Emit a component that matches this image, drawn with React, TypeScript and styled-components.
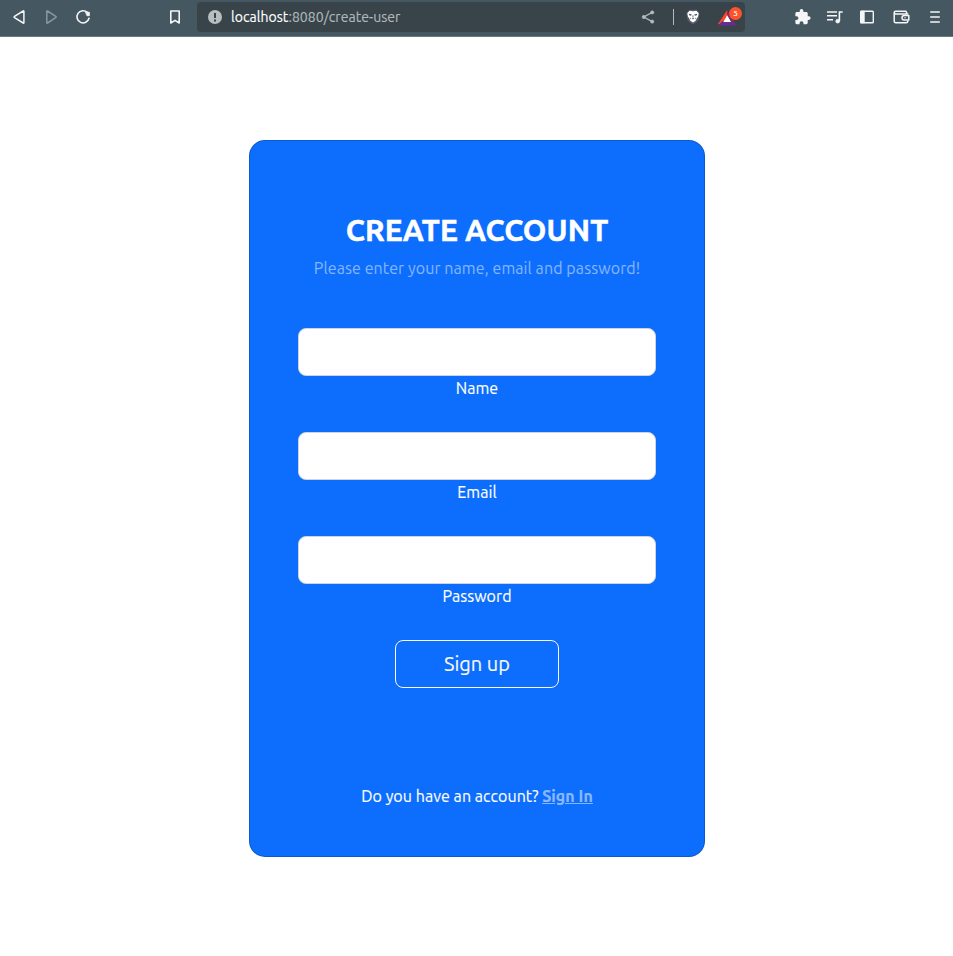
import React from "react";
import styled, { createGlobalStyle } from "styled-components";

const GlobalStyle = createGlobalStyle`
  *, *::before, *::after { box-sizing: border-box; }
  body {
    margin: 0;
    background: #fff;
    color: #fff;
    font-family: Ubuntu, "Noto Sans", sans-serif;
    font-size: 16px;
    line-height: 1.5;
    -webkit-text-stroke-width: 0.15px;
  }
  h2, p { margin: 0; }
`;

const Page = styled.div`
  display: flex;
  flex-direction: column;
  min-height: 956px;
`;

const Toolbar = styled.header`
  display: flex;
  align-items: flex-start;
  height: 37px;
  padding: 2px 2px 0 3px;
  background: #455760;
  border-bottom: 1px solid #6a7980;
`;

const IconButton = styled.button<{ $width?: number; $dim?: boolean }>`
  display: grid;
  place-items: center;
  flex: none;
  width: ${({ $width = 32 }) => $width}px;
  height: 30px;
  padding: 0;
  border: 0;
  background: none;
  color: ${({ $dim }) => ($dim ? "#8b979d" : "#f4f6f7")};
`;

const NavGroup = styled.nav`
  display: flex;
  width: 156px;
`;

const ActionGroup = styled.div`
  display: flex;
  margin-left: auto;
`;

const AddressBar = styled.div`
  display: flex;
  align-items: center;
  width: 548px;
  height: 30px;
  margin-left: 6px;
  padding: 0 2px 0 10px;
  border-radius: 4px;
  background: #38444a;
`;

const Address = styled.span`
  flex: 1;
  margin-left: 8px;
  color: #b1b8bb;
  font-size: 14px;
  line-height: 20px;
  letter-spacing: 0.05px;
`;

const Host = styled.span`
  color: #fff;
`;

const Separator = styled.span`
  width: 1px;
  height: 16px;
  margin: 0 12px 0 17px;
  background: #b3babd;
`;

const Rewards = styled.span`
  position: relative;
  display: block;
  width: 25px;
  height: 24px;
  margin-left: 18px;
`;

const RewardsMark = styled.svg`
  display: block;
  margin-top: 5px;
`;

const Badge = styled.span`
  position: absolute;
  top: 2px;
  right: 1px;
  width: 13px;
  height: 13px;
  border-radius: 50%;
  background: #fb542b;
  color: #fff;
  font-size: 8px;
  line-height: 13px;
  text-align: center;
`;

const Main = styled.main`
  display: flex;
  justify-content: center;
  padding-top: 103px;
`;

const Card = styled.section`
  display: flex;
  flex-direction: column;
  align-items: center;
  width: 456px;
  height: 717px;
  margin-left: 1px;
  padding: 71px 48px 48px;
  border: 1px solid rgba(0, 0, 0, 0.175);
  border-radius: 16px;
  background: #0d6efd;
`;

const Title = styled.h2`
  margin-bottom: 8px;
  font-size: 30px;
  font-weight: 700;
  line-height: 36px;
  letter-spacing: 0.1px;
  text-transform: uppercase;
  -webkit-text-stroke-width: 0.5px;
`;

const Subtitle = styled.p`
  margin-bottom: 48px;
  color: rgba(255, 255, 255, 0.5);
  letter-spacing: 0.09px;
  -webkit-text-stroke-width: 0;
`;

const Form = styled.form`
  display: flex;
  flex-direction: column;
  align-items: center;
  width: 100%;
`;

const Field = styled.div`
  display: flex;
  flex-direction: column;
  align-items: center;
  width: 100%;
  margin-bottom: 32px;
`;

const Input = styled.input`
  width: 100%;
  height: 48px;
  padding: 8px 16px;
  border: 1px solid #ced4da;
  border-radius: 8px;
  background: #fff;
  font: inherit;
  font-size: 20px;
`;

const Label = styled.label`
  line-height: 24px;
  letter-spacing: 0.05px;
`;

const SubmitButton = styled.button`
  width: 164px;
  height: 48px;
  border: 1px solid #f8f9fa;
  border-radius: 8px;
  background: transparent;
  color: #f8f9fa;
  font-family: inherit;
  font-size: 20px;
  line-height: 30px;
`;

const Prompt = styled.p`
  margin-top: auto;
  letter-spacing: 0.06px;
`;

const SignInLink = styled.a`
  color: rgba(255, 255, 255, 0.5);
  font-weight: 700;
  text-decoration: underline;
`;

const FIELDS = [
  { id: "name", label: "Name", type: "text" },
  { id: "email", label: "Email", type: "email" },
  { id: "password", label: "Password", type: "password" },
];

const BackIcon = () => (
  <svg width="16" height="16" viewBox="0 0 16 16" fill="none" stroke="currentColor" strokeWidth="1.5" strokeLinejoin="round">
    <path d="M12.9 2.3v11.4q0 .8-.7.3L3.5 8.6q-.8-.6 0-1.2L12.2 2q.7-.5.7.3Z" />
  </svg>
);

const ForwardIcon = () => (
  <svg width="16" height="16" viewBox="0 0 16 16" fill="none" stroke="currentColor" strokeWidth="1.5" strokeLinejoin="round">
    <path d="M3.8 2.3v11.4q0 .8.7.3l8.2-5.4q.8-.6 0-1.2L4.5 2q-.7-.5-.7.3Z" />
  </svg>
);

const ReloadIcon = () => (
  <svg width="16" height="16" viewBox="0 0 16 16" fill="none" stroke="currentColor" strokeWidth="1.6" strokeLinecap="round">
    <path d="M12.3 3.4A6.1 6.1 0 1 0 14 9.3" />
    <path d="M10.8 3.2h3.6v3.5h-2.2Z" fill="currentColor" strokeWidth=".8" strokeLinejoin="round" />
  </svg>
);

const BookmarkIcon = () => (
  <svg width="16" height="16" viewBox="0 0 16 16" fill="none" stroke="currentColor" strokeWidth="1.6" strokeLinejoin="round">
    <path d="M3.8 2h8.4v12L8 11.4 3.8 14Z" />
  </svg>
);

const InfoIcon = () => (
  <svg width="16" height="16" viewBox="0 0 16 16">
    <circle cx="8" cy="8" r="7" fill="#b8bdc0" />
    <path d="M8 4v5M8 10.4v2" stroke="#38444a" strokeWidth="2" />
  </svg>
);

const ShareIcon = () => (
  <svg width="16" height="16" viewBox="0 0 16 16" fill="#b5babd" stroke="#b5babd">
    <path d="M12.2 3.4 3.8 8l8.4 4.6" fill="none" strokeWidth="1.2" />
    <circle cx="12.2" cy="3.4" r="1.7" strokeWidth=".5" />
    <circle cx="3.8" cy="8" r="1.7" strokeWidth=".5" />
    <circle cx="12.2" cy="12.6" r="1.7" strokeWidth=".5" />
  </svg>
);

const LionIcon = () => (
  <svg width="14" height="16" viewBox="0 0 14 16">
    <path d="M3.5.8h7l1.5 1.3 1.5 2-.8 6.2-1.6 2.6L7 15.6l-4.1-2.7-1.6-2.6L.5 4.1 2 2.1Z" fill="#5b5a6c" />
    <path d="m3.6 1.8 3.4.5 3.4-.5 2.3 2.5-.6 3.2-1.4 2.1-1 2.1L7 13.4l-2.7-1.7-1-2.1-1.4-2.1-.6-3.2Z" fill="#fff" />
    <path d="m2.8 4.8 2.9.7-.6 1.3-1.9-.6ZM11.2 4.8l-2.9.7.6 1.3 1.9-.6ZM5.6 9.3h2.8L7 10.6ZM6.6 6.3h.8v2.2h-.8ZM4 8.5l1.2 1-.6.8ZM10 8.5l-1.2 1 .6.8Z" fill="#4b4a5c" />
  </svg>
);

const RewardsIcon = () => (
  <RewardsMark width="19" height="16" viewBox="0 0 19 16">
    <path d="M9.2 0v6L4.5 14H0Z" fill="#ff4724" />
    <path d="M0 15.5 4.5 11h9l4.5 4.5Z" fill="#662d91" />
    <path d="M9.2 0 18 15.5l-4.5-4.5-4.3-6Z" fill="#9e1f63" />
    <path d="m9.2 5.2 3.9 6.8H5.3Z" fill="#fff" />
  </RewardsMark>
);

const PuzzleIcon = () => (
  <svg width="16" height="16" viewBox="1.5 1 22 22" fill="currentColor">
    <path d="M20.5 11H19V7c0-1.1-.9-2-2-2h-4V3.5a2.5 2.5 0 0 0-5 0V5H4c-1.1 0-2 .9-2 2v3.8h1.5a2.7 2.7 0 0 1 0 5.4H2V20c0 1.1.9 2 2 2h3.8v-1.5a2.7 2.7 0 0 1 5.4 0V22H17c1.1 0 2-.9 2-2v-4h1.5a2.5 2.5 0 0 0 0-5Z" />
  </svg>
);

const PlaylistIcon = () => (
  <svg width="18" height="16" viewBox="0 0 18 16" fill="none" stroke="currentColor" strokeWidth="1.6">
    <path d="M1 3h10M1 6.8h10M1 10.7h6M13.4 12V3h3.3" />
    <circle cx="11.7" cy="12.2" r="1.9" fill="currentColor" strokeWidth=".6" />
  </svg>
);

const SidebarIcon = () => (
  <svg width="16" height="16" viewBox="0 0 16 16" fill="none" stroke="currentColor" strokeWidth="1.4">
    <rect x="1.7" y="2.2" width="12.6" height="11.6" rx=".8" />
    <path d="M2 2.5h3v11H2Z" fill="currentColor" />
  </svg>
);

const WalletIcon = () => (
  <svg width="17" height="16" viewBox="0 0 17 16" fill="none" stroke="currentColor" strokeWidth="1.5" strokeLinejoin="round">
    <path d="M14.8 5.6V4.9H2.6Q1.2 4.6 1.2 3.4 1.3 2.2 2.6 2.2h9.9q1.2.1 1.2 2.5M1.2 3.5v8.8q0 1.5 1.5 1.5h10.4q1.7 0 1.7-1.5v-.8" />
    <path d="M15.8 6.4h-4.6q-2.2 0-2.2 2.3t2.2 2.3h4.6Z" />
    <circle cx="12" cy="8.7" r=".7" fill="currentColor" stroke="none" />
  </svg>
);

const MenuIcon = () => (
  <svg width="16" height="16" viewBox="0 0 16 16" fill="none" stroke="currentColor" strokeWidth="1.6">
    <path d="M3.2 3h9.6M3.2 8h9.6M3.2 13h9.6" />
  </svg>
);

export default function App() {
  return (
    <Page>
      <GlobalStyle />
      <Toolbar>
        <NavGroup>
          <IconButton aria-label="Back"><BackIcon /></IconButton>
          <IconButton aria-label="Forward" $dim><ForwardIcon /></IconButton>
          <IconButton aria-label="Reload"><ReloadIcon /></IconButton>
        </NavGroup>
        <IconButton aria-label="Bookmark"><BookmarkIcon /></IconButton>
        <AddressBar>
          <InfoIcon />
          <Address><Host>localhost</Host>:8080/create-user</Address>
          <ShareIcon />
          <Separator />
          <LionIcon />
          <Rewards>
            <RewardsIcon />
            <Badge>5</Badge>
          </Rewards>
        </AddressBar>
        <ActionGroup>
          <IconButton aria-label="Extensions"><PuzzleIcon /></IconButton>
          <IconButton aria-label="Media"><PlaylistIcon /></IconButton>
          <IconButton aria-label="Sidebar"><SidebarIcon /></IconButton>
          <IconButton aria-label="Wallet" $width={36}><WalletIcon /></IconButton>
          <IconButton aria-label="Menu"><MenuIcon /></IconButton>
        </ActionGroup>
      </Toolbar>
      <Main>
        <Card>
          <Title>Create account</Title>
          <Subtitle>Please enter your name, email and password!</Subtitle>
          <Form>
            {FIELDS.map(({ id, label, type }) => (
              <Field key={id}>
                <Input id={id} type={type} />
                <Label htmlFor={id}>{label}</Label>
              </Field>
            ))}
            <SubmitButton type="button">Sign up</SubmitButton>
          </Form>
          <Prompt>
            Do you have an account? <SignInLink href="#">Sign In</SignInLink>
          </Prompt>
        </Card>
      </Main>
    </Page>
  );
}
